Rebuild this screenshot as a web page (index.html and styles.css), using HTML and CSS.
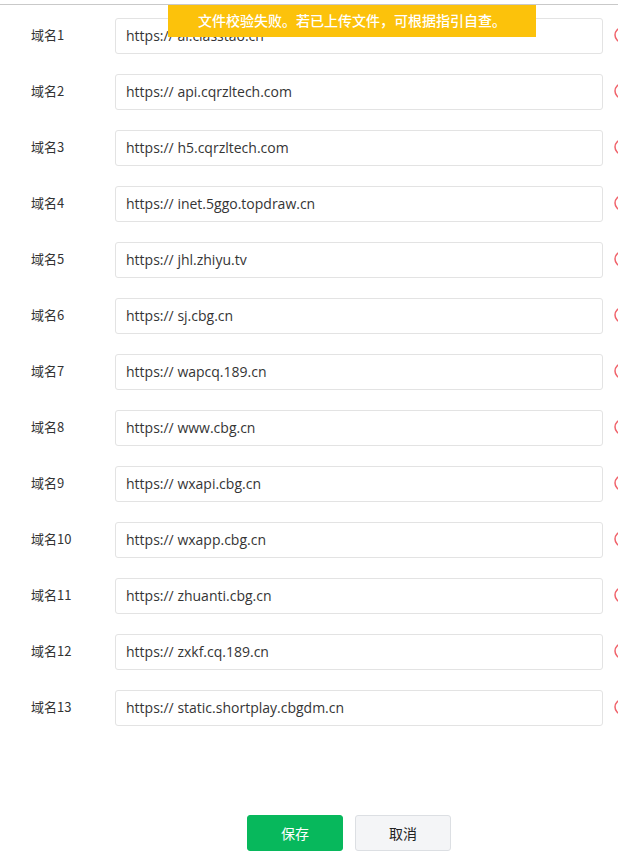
FILE: index.html
```html
<!DOCTYPE html>
<html lang="zh">
<head>
<meta charset="utf-8">
<link rel="stylesheet" href="styles.css">
</head>
<body>
<div class="page">
  <div class="topbar"></div>
  <div class="toast">文件校验失败。若已上传文件，可根据指引自查。</div>
  <div class="form">
    <div class="row"><span class="label">域名1</span><div class="input">https:// ai.classtao.cn</div><svg class="del" viewBox="0 0 16 16"><circle cx="8" cy="8" r="7" /><line x1="4.5" y1="8" x2="11.5" y2="8"/></svg></div>
    <div class="row"><span class="label">域名2</span><div class="input">https:// api.cqrzltech.com</div><svg class="del" viewBox="0 0 16 16"><circle cx="8" cy="8" r="7" /><line x1="4.5" y1="8" x2="11.5" y2="8"/></svg></div>
    <div class="row"><span class="label">域名3</span><div class="input">https:// h5.cqrzltech.com</div><svg class="del" viewBox="0 0 16 16"><circle cx="8" cy="8" r="7" /><line x1="4.5" y1="8" x2="11.5" y2="8"/></svg></div>
    <div class="row"><span class="label">域名4</span><div class="input">https:// inet.5ggo.topdraw.cn</div><svg class="del" viewBox="0 0 16 16"><circle cx="8" cy="8" r="7" /><line x1="4.5" y1="8" x2="11.5" y2="8"/></svg></div>
    <div class="row"><span class="label">域名5</span><div class="input">https:// jhl.zhiyu.tv</div><svg class="del" viewBox="0 0 16 16"><circle cx="8" cy="8" r="7" /><line x1="4.5" y1="8" x2="11.5" y2="8"/></svg></div>
    <div class="row"><span class="label">域名6</span><div class="input">https:// sj.cbg.cn</div><svg class="del" viewBox="0 0 16 16"><circle cx="8" cy="8" r="7" /><line x1="4.5" y1="8" x2="11.5" y2="8"/></svg></div>
    <div class="row"><span class="label">域名7</span><div class="input">https:// wapcq.189.cn</div><svg class="del" viewBox="0 0 16 16"><circle cx="8" cy="8" r="7" /><line x1="4.5" y1="8" x2="11.5" y2="8"/></svg></div>
    <div class="row"><span class="label">域名8</span><div class="input">https:// www.cbg.cn</div><svg class="del" viewBox="0 0 16 16"><circle cx="8" cy="8" r="7" /><line x1="4.5" y1="8" x2="11.5" y2="8"/></svg></div>
    <div class="row"><span class="label">域名9</span><div class="input">https:// wxapi.cbg.cn</div><svg class="del" viewBox="0 0 16 16"><circle cx="8" cy="8" r="7" /><line x1="4.5" y1="8" x2="11.5" y2="8"/></svg></div>
    <div class="row"><span class="label">域名10</span><div class="input">https:// wxapp.cbg.cn</div><svg class="del" viewBox="0 0 16 16"><circle cx="8" cy="8" r="7" /><line x1="4.5" y1="8" x2="11.5" y2="8"/></svg></div>
    <div class="row"><span class="label">域名11</span><div class="input">https:// zhuanti.cbg.cn</div><svg class="del" viewBox="0 0 16 16"><circle cx="8" cy="8" r="7" /><line x1="4.5" y1="8" x2="11.5" y2="8"/></svg></div>
    <div class="row"><span class="label">域名12</span><div class="input">https:// zxkf.cq.189.cn</div><svg class="del" viewBox="0 0 16 16"><circle cx="8" cy="8" r="7" /><line x1="4.5" y1="8" x2="11.5" y2="8"/></svg></div>
    <div class="row"><span class="label">域名13</span><div class="input">https:// static.shortplay.cbgdm.cn</div><svg class="del" viewBox="0 0 16 16"><circle cx="8" cy="8" r="7" /><line x1="4.5" y1="8" x2="11.5" y2="8"/></svg></div>
  </div>
  <div class="actions">
    <button class="btn primary">保存</button>
    <button class="btn">取消</button>
  </div>
</div>
</body>
</html>
```
FILE: styles.css
```css
html, body {
  margin: 0;
  padding: 0;
  background: #fff;
  overflow: hidden;
}
body {
  font-family: "Open Sans", "Noto Sans CJK SC", sans-serif;
  color: #333;
}
.page {
  position: relative;
  width: 618px;
  height: 855px;
  overflow: hidden;
}
.topbar {
  height: 4px;
  border-bottom: 1px solid #c9c9c9;
}
.toast {
  position: absolute;
  left: 168px;
  top: 5px;
  width: 368px;
  height: 32px;
  background: #fcc20b;
  color: #fff;
  font-family: "Noto Sans CJK SC", sans-serif;
  font-size: 14px;
  font-weight: 500;
  line-height: 30px;
  text-align: center;
  z-index: 2;
}
.form {
  display: flex;
  flex-direction: column;
  gap: 20px;
  padding-top: 13px;
}
.row {
  display: flex;
  align-items: center;
  height: 36px;
}
.label {
  width: 84px;
  padding-left: 31px;
  padding-bottom: 4px;
  font-family: "Noto Sans CJK SC", sans-serif;
  font-size: 13px;
  color: #333;
  flex: none;
}
.input {
  box-sizing: border-box;
  width: 488px;
  height: 36px;
  border: 1px solid #e3e3e3;
  border-radius: 3px;
  padding-left: 10px;
  font-size: 14px;
  line-height: 34px;
  color: #353535;
  flex: none;
}
.del {
  flex: none;
  width: 16px;
  height: 16px;
  margin-left: 11px;
  margin-bottom: 3px;
  fill: none;
  stroke: #f0636b;
  stroke-width: 1.5;
}
.actions {
  display: flex;
  justify-content: center;
  gap: 12px;
  margin-top: 89px;
  padding-left: 80px;
}
.btn {
  width: 96px;
  height: 36px;
  border-radius: 3px;
  border: 1px solid #dcdfe3;
  background: #f4f5f7;
  color: #222;
  font-family: "Noto Sans CJK SC", sans-serif;
  font-size: 14px;
  padding: 0;
}
.btn.primary {
  background: #07b85c;
  border-color: #07b85c;
  color: #fff;
}
```
